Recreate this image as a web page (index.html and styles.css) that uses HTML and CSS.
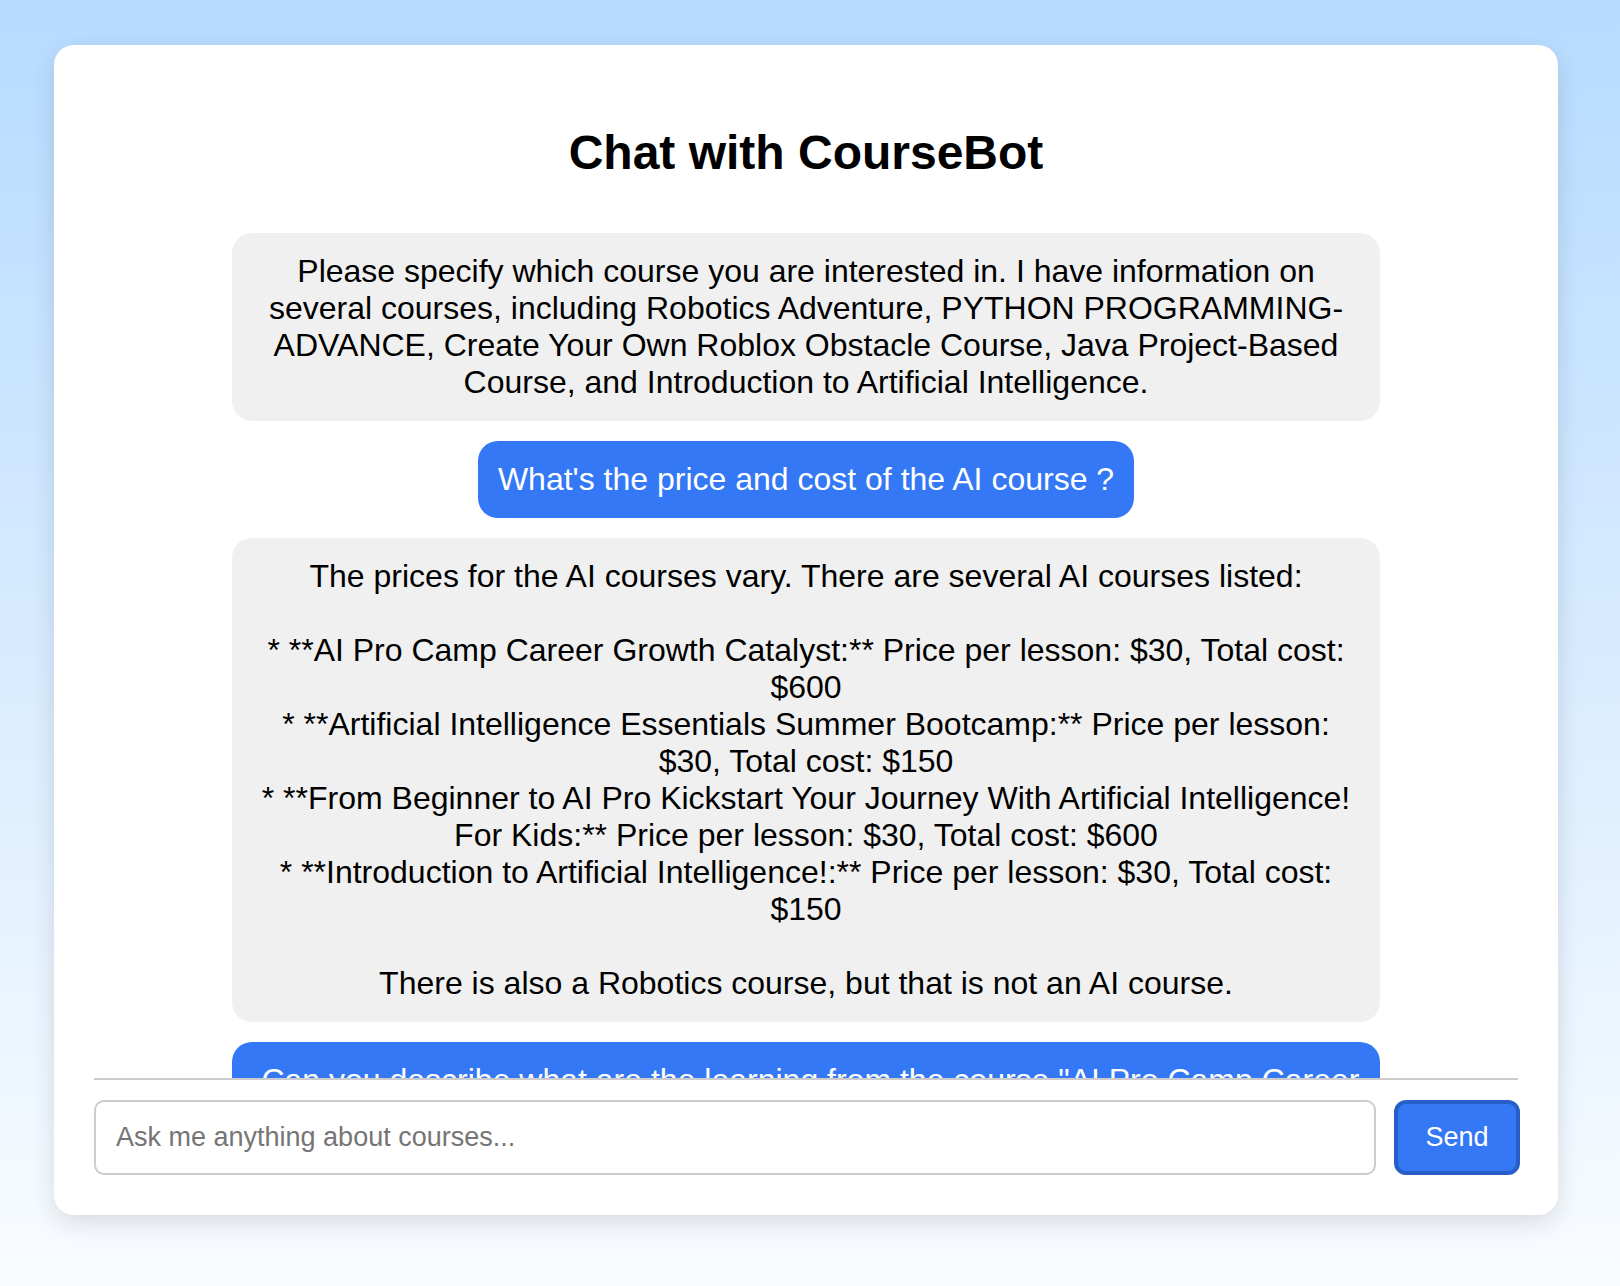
FILE: index.html
```html
<!DOCTYPE html>
<html lang="en">
<head>
<meta charset="utf-8">
<meta name="viewport" content="width=device-width, initial-scale=1">
<title>Chat with CourseBot</title>
<link rel="stylesheet" href="styles.css">
</head>
<body>
<main class="chat">
  <h1 class="chat-title">Chat with CourseBot</h1>
  <div class="messages">
    <div class="message bot">Please specify which course you are interested in. I have information on several courses, including Robotics Adventure, PYTHON PROGRAMMING-ADVANCE, Create Your Own Roblox Obstacle Course, Java Project-Based Course, and Introduction to Artificial Intelligence.</div>
    <div class="message user">What's the price and cost of the AI course ?</div>
    <div class="message bot">The prices for the AI courses vary. There are several AI courses listed:

* **AI Pro Camp Career Growth Catalyst:** Price per lesson: $30, Total cost: $600
* **Artificial Intelligence Essentials Summer Bootcamp:** Price per lesson: $30, Total cost: $150
* **From Beginner to AI Pro Kickstart Your Journey With Artificial Intelligence! For Kids:** Price per lesson: $30, Total cost: $600
* **Introduction to Artificial Intelligence!:** Price per lesson: $30, Total cost: $150

There is also a Robotics course, but that is not an AI course.</div>
    <div class="message user"> Can you describe what are the learning from the course "AI Pro Camp Career Growth Catalyst"</div>
  </div>
  <form class="composer">
    <input class="question" type="text" aria-label="Your question" placeholder="Ask me anything about courses...">
    <button class="send" type="button">Send</button>
  </form>
</main>
</body>
</html>
```
FILE: styles.css
```css
* {
  box-sizing: border-box;
}

body {
  margin: 0;
  padding: 45px 62px 71px 54px;
  height: 100vh;
  font-family: "Liberation Sans", Arial, sans-serif;
  color: #000;
  background: linear-gradient(to bottom, #b6dbff, #f9fcff);
}

.chat {
  display: flex;
  flex-direction: column;
  height: 100%;
  padding: 40px;
  border-radius: 20px;
  background: #fff;
  box-shadow: 0 8px 24px rgba(0, 0, 0, 0.12);
}

.chat-title {
  margin: 40px 0;
  font-size: 48px;
  line-height: 56px;
  text-align: center;
}

.messages {
  display: flex;
  flex: 1;
  flex-direction: column;
  align-items: center;
  gap: 20px;
  min-height: 0;
  padding-top: 12px;
  overflow-y: auto;
  scrollbar-width: none;
}

.message {
  flex-shrink: 0;
  max-width: 1148px;
  padding: 20px;
  border-radius: 20px;
  font-size: 32px;
  line-height: 37px;
  text-align: center;
  white-space: pre-wrap;
}

.bot {
  background: #f0f0f0;
}

.user {
  color: #fff;
  background: #3478f6;
}

.composer {
  display: flex;
  gap: 18px;
  padding-top: 20px;
  border-top: 2px solid #ccc;
}

.question {
  flex: 1;
  min-width: 0;
  height: 75px;
  padding: 0 20px;
  border: 2px solid #ccc;
  border-radius: 10px;
  font: inherit;
  font-size: 27px;
  background: #fff;
}

.question::placeholder {
  color: #757575;
}

.send {
  width: 126px;
  margin-right: -2px;
  padding: 0;
  border: 4px solid #285ec8;
  border-radius: 12px;
  font: inherit;
  font-size: 27px;
  color: #fff;
  background: #3478f6;
}
```
